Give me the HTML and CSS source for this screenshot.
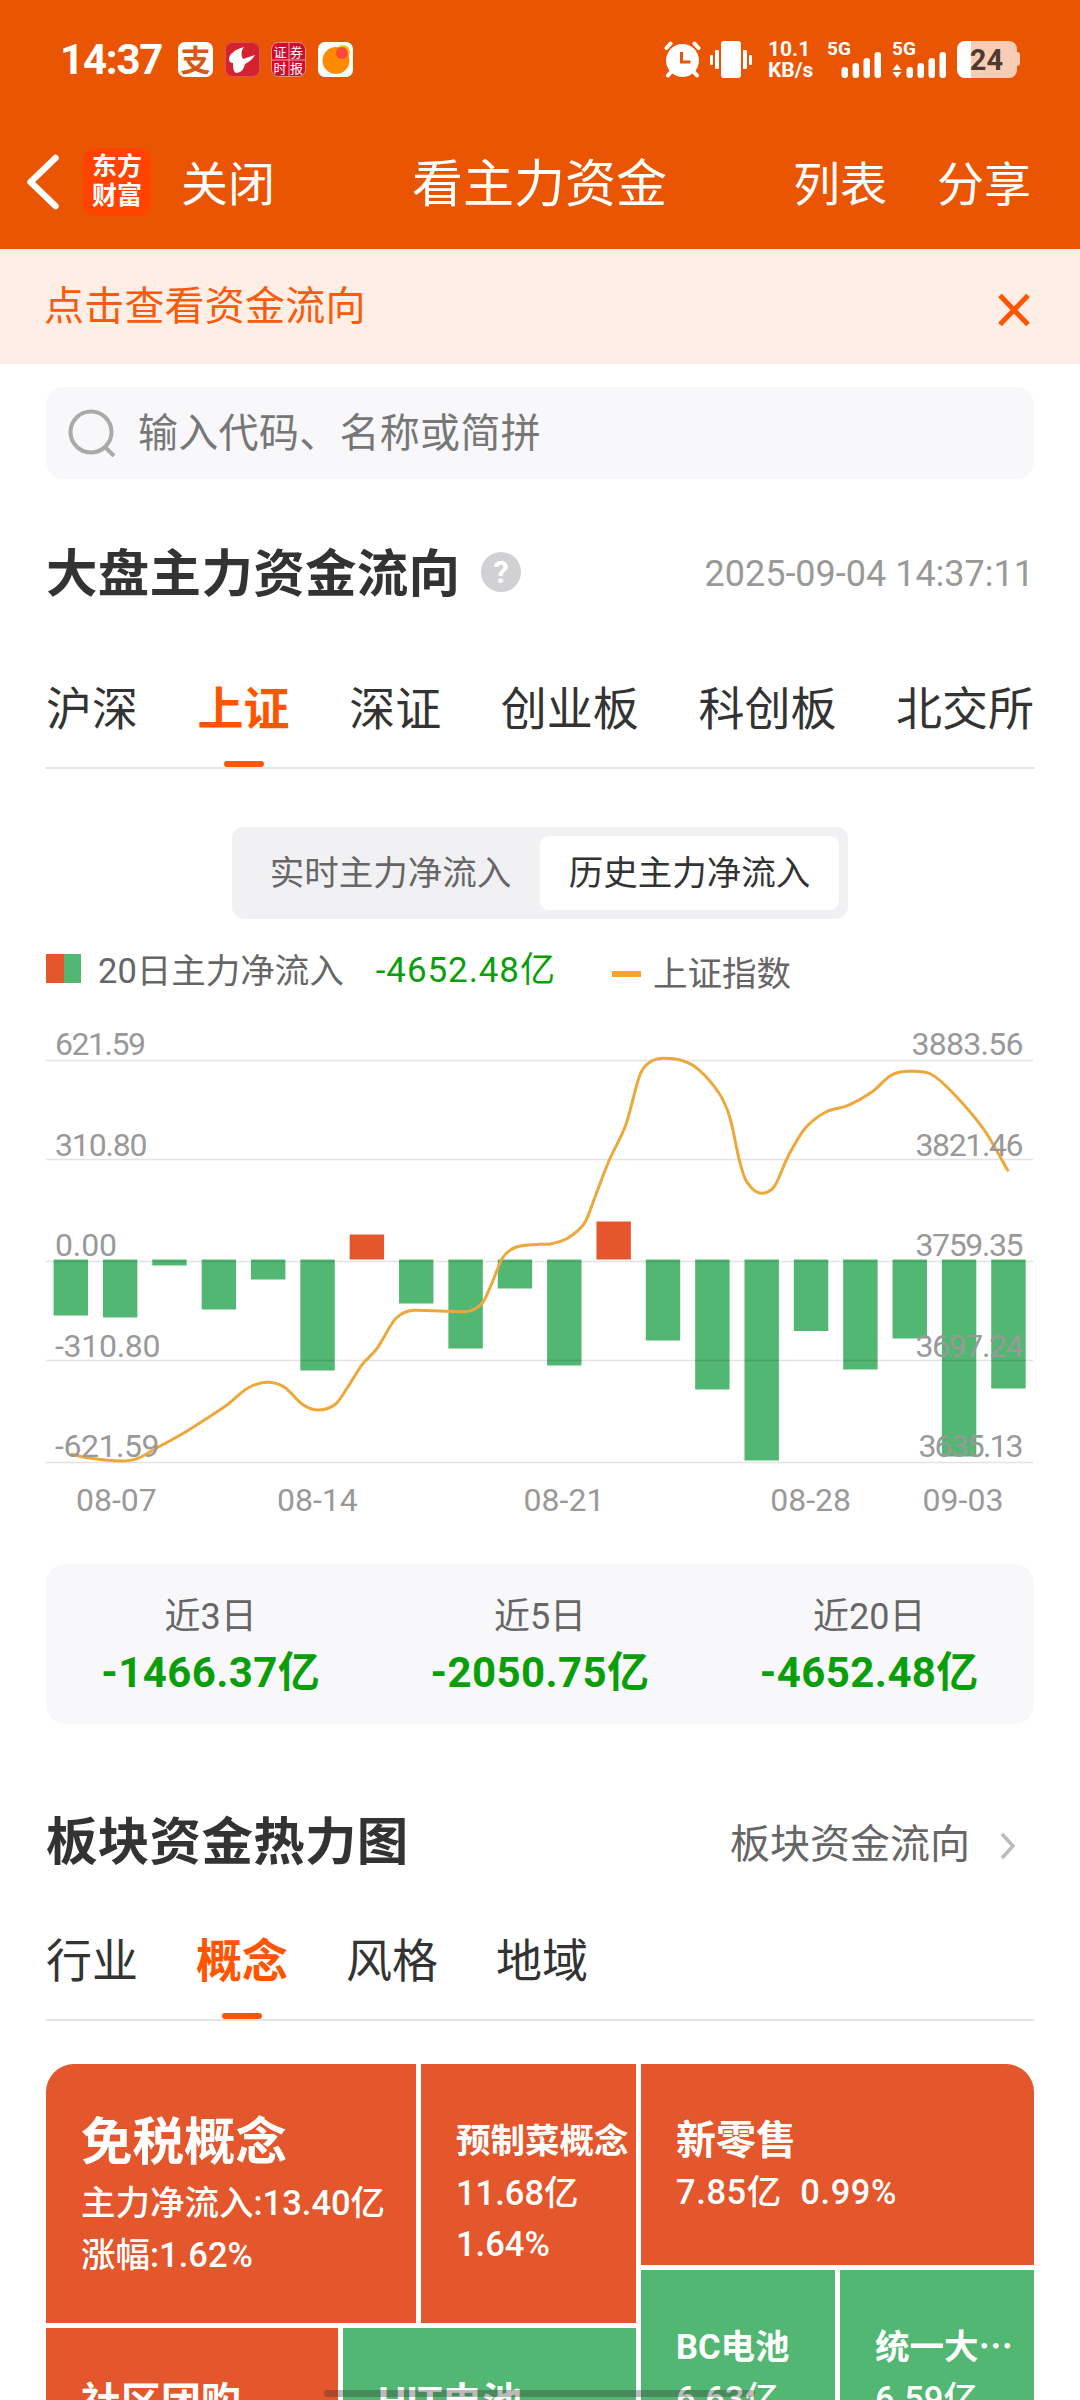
FILE: index.html
```html
<!DOCTYPE html>
<html lang="zh">
<head>
    <meta charset="UTF-8">
    <meta name="viewport" content="width=device-width, initial-scale=1.0">
    <title>看主力资金</title>
    <link rel="stylesheet" href="styles.css">
</head>
<body>
    <header class="header">
        <div class="status-bar">
            <span class="status-time">14:37</span>
            <div class="app-icons">
                <svg width="35" height="35" viewBox="0 0 35 35">
                    <rect width="35" height="35" rx="7" fill="#fff"/>
                    <text class="zhi" x="17.5" y="28.500" text-anchor="middle">支</text>
                </svg>
                <svg width="35" height="35" viewBox="0 0 35 35">
                    <rect x=".5" y=".5" width="34" height="34" rx="7" fill="#d4232f" stroke="#e2505a"/>
                    <path d="M19 5C11 7 4 12 4 17c0 3 2 4 4 4 0 4 0 8 3 10 5 0 8-4 9-9 4-2 8-5 10-9l-12 4c-2-4-2-8 1-12z" fill="#fff"/>
                </svg>
                <svg width="35" height="35" viewBox="0 0 35 35">
                    <rect x=".5" y=".5" width="34" height="34" rx="7" fill="#c8102e" stroke="#e88"/>
                    <path d="M18 0v35M0 18h35" stroke="#f0a0a8" stroke-width="1"/>
                    <g class="seal">
                        <text x="2.5" y="14.500">证</text>
                        <text x="19" y="14.500">券</text>
                        <text x="2.5" y="31">时</text>
                        <text x="19" y="31">报</text>
                    </g>
                </svg>
                <svg width="35" height="35" viewBox="0 0 35 35">
                    <rect width="35" height="35" rx="7" fill="#fff"/>
                    <circle cx="25" cy="10" r="7" fill="#fbc112"/>
                    <circle cx="18" cy="18.500" r="13.500" fill="#ff8a00"/>
                    <circle cx="24" cy="11" r="6" fill="#fb4a3a"/>
                </svg>
            </div>
            <div class="status-right">
                <svg width="37" height="37" viewBox="0 0 37 37">
                    <g stroke="#fff" stroke-width="4" stroke-linecap="round">
                        <path d="M2.500 7l4-4.500M34.500 7l-4-4.500M7 31l-3 3.500M30 31l3 3.500"/>
                    </g>
                    <circle cx="18.500" cy="19.500" r="16.500" fill="#fff"/>
                    <path d="M17.500 11v10h9" fill="none" stroke="#ea5504" stroke-width="3"/>
                </svg>
                <svg class="vibrate" width="42" height="37" viewBox="0 0 42 37" fill="#fff">
                    <rect x="11" y="0" width="20" height="37" rx="3"/>
                    <rect x="0" y="14" width="3" height="10" rx="1"/>
                    <rect x="5" y="9" width="4" height="19" rx="1"/>
                    <rect x="33" y="9" width="4" height="19" rx="1"/>
                    <rect x="39" y="14" width="3" height="10" rx="1"/>
                </svg>
                <div class="net-speed">
                    <span>10.1</span>
                    <span>KB/s</span>
                </div>
                <svg class="signal" width="55" height="37" viewBox="0 0 55 37" fill="#fff">
                    <text x="0" y="14">5G</text>
                    <rect x="14.500" y="26" width="6.500" height="11" rx="3"/>
                    <rect x="25.500" y="22" width="6.500" height="15" rx="3"/>
                    <rect x="36.500" y="17" width="6.500" height="20" rx="3"/>
                    <rect x="47.500" y="11" width="6.500" height="26" rx="3"/>
                </svg>
                <svg class="signal second" width="55" height="37" viewBox="0 0 55 37" fill="#fff">
                    <text x="0" y="14">5G</text>
                    <path d="M5 23l4.500 6h-9zM5 37l4.500-6h-9z"/>
                    <rect x="14.500" y="26" width="6.500" height="11" rx="3"/>
                    <rect x="25.500" y="22" width="6.500" height="15" rx="3"/>
                    <rect x="36.500" y="17" width="6.500" height="20" rx="3"/>
                    <rect x="47.500" y="11" width="6.500" height="26" rx="3"/>
                </svg>
                <svg class="battery" width="63" height="37" viewBox="0 0 63 37">
                    <path d="M14 0h38a8 8 0 0 1 8 8v3q3 0 3 3v8q0 3-3 3v4a8 8 0 0 1-8 8H14z" fill="#f9ccb4"/>
                    <path d="M14 0H8a8 8 0 0 0-8 8v21a8 8 0 0 0 8 8h6z" fill="#fff"/>
                    <text x="29.500" y="28.500" text-anchor="middle">24</text>
                </svg>
            </div>
        </div>
        <nav class="nav-bar">
            <svg width="32" height="56" viewBox="0 0 32 56">
                <path d="M28.500 4L3.500 28l25 24" fill="none" stroke="#fff" stroke-width="6.500" stroke-linecap="round" stroke-linejoin="round"/>
            </svg>
            <div class="logo">东方<br>财富</div>
            <span class="nav-close">关闭</span>
            <h1>看主力资金</h1>
            <span class="nav-list">列表</span>
            <span>分享</span>
        </nav>
    </header>

    <div class="notice">
        <span>点击查看资金流向</span>
        <svg width="34" height="34" viewBox="0 0 34 34">
            <path d="M3 2.500l28 29M31 2.500l-28 29" stroke="#ff5500" stroke-width="5"/>
        </svg>
    </div>

    <main class="container">
        <div class="search">
            <svg width="48" height="48" viewBox="0 0 48 48" fill="none" stroke="#aaa" stroke-width="4">
                <circle cx="23" cy="23" r="20.500"/>
                <path d="M37 38l9 9"/>
            </svg>
            <span>输入代码、名称或简拼</span>
        </div>

        <div class="section-head market-head">
            <h2>大盘主力资金流向</h2>
            <svg class="help" width="40" height="40" viewBox="0 0 40 40">
                <circle cx="20" cy="20" r="20" fill="#d1d1d3"/>
                <text x="20" y="31" text-anchor="middle">?</text>
            </svg>
            <span class="time">2025-09-04 14:37:11</span>
        </div>

        <div class="tabs market-tabs">
            <span>沪深</span>
            <span class="active">上证</span>
            <span>深证</span>
            <span>创业板</span>
            <span>科创板</span>
            <span>北交所</span>
        </div>

        <div class="segment">
            <span>实时主力净流入</span>
            <span class="selected">历史主力净流入</span>
        </div>

        <div class="legend">
            <i class="legend-bar"></i>
            <span>20日主力净流入</span>
            <span class="legend-value">-4652.48亿</span>
            <i class="legend-line"></i>
            <span class="legend-index">上证指数</span>
        </div>

        <svg class="chart" id="chart" width="988" height="510" viewBox="0 0 988 510"></svg>

        <div class="summary">
            <div class="summary-item">
                <div class="summary-label">近3日</div>
                <div class="summary-value">-1466.37亿</div>
            </div>
            <div class="summary-item">
                <div class="summary-label">近5日</div>
                <div class="summary-value">-2050.75亿</div>
            </div>
            <div class="summary-item">
                <div class="summary-label">近20日</div>
                <div class="summary-value">-4652.48亿</div>
            </div>
        </div>

        <div class="section-head sector-head">
            <h2>板块资金热力图</h2>
            <span class="more">板块资金流向</span>
            <svg width="16" height="28" viewBox="0 0 16 28">
                <path d="M2 2l11 12L2 26" fill="none" stroke="#bbb" stroke-width="3.500"/>
            </svg>
        </div>

        <div class="tabs sector-tabs">
            <span>行业</span>
            <span class="active">概念</span>
            <span>风格</span>
            <span>地域</span>
        </div>

        <div class="heatmap">
            <div class="heat-left">
                <div class="heat-row row-top">
                    <div class="cell up cell-first">
                        <div class="name name-lg">免税概念</div>
                        <p>主力净流入:13.40亿</p>
                        <p>涨幅:1.62%</p>
                    </div>
                    <div class="cell up cell-second">
                        <div class="name name-sm">预制菜概念</div>
                        <p>11.68亿</p>
                        <p>1.64%</p>
                    </div>
                </div>
                <div class="heat-row row-bottom">
                    <div class="cell up cell-community">
                        <div class="name">社区团购</div>
                    </div>
                    <div class="cell down">
                        <div class="name">HIT电池</div>
                    </div>
                </div>
            </div>
            <div class="heat-right">
                <div class="cell up cell-retail">
                    <div class="name">新零售</div>
                    <p class="wide">7.85亿&nbsp; 0.99%</p>
                </div>
                <div class="heat-row row-bottom">
                    <div class="cell down cell-small">
                        <div class="name name-sm">BC电池</div>
                        <p>6.63亿</p>
                    </div>
                    <div class="cell down cell-small">
                        <div class="name name-sm">统一大⋯</div>
                        <p>6.59亿</p>
                    </div>
                </div>
            </div>
        </div>
    </main>

    <div class="home-bar"></div>

    <script src="chart.js"></script>
</body>
</html>
```
FILE: styles.css
```css
* {
    box-sizing: border-box;
    margin: 0;
    padding: 0;
}

html, body {
    height: 2400px;
    overflow: hidden;
}

body {
    width: 1080px;
    font-family: Roboto, "Noto Sans CJK SC", sans-serif;
    background: #fff;
    color: #333;
}

svg {
    display: block;
    flex: none;
}

/* 顶部 */
.header {
    height: 249px;
    background: #ea5504;
    color: #fff;
}

.status-bar {
    display: flex;
    align-items: center;
    height: 119px;
    padding: 0 60px 0 60px;
}

.status-time {
    width: 118px;
    font-size: 42px;
    line-height: 50px;
    font-weight: 700;
    letter-spacing: -1.2px;
}

.app-icons {
    display: flex;
    gap: 11.500px;
}

.zhi {
    font: 700 30px/1 "Noto Sans CJK SC", sans-serif;
    fill: #d65a14;
}

.seal {
    font: 13px/1 "Noto Sans CJK SC", sans-serif;
    fill: #fff;
}

.status-right {
    display: flex;
    align-items: center;
    margin-left: auto;
}

.vibrate {
    margin-left: 9px;
}

.net-speed {
    width: 59px;
    padding-left: 16px;
    font-size: 21px;
    line-height: 21px;
    font-weight: 700;
}

.net-speed span {
    display: block;
}

.signal {
    margin-left: 16px;
    font-size: 19px;
    font-weight: 700;
    overflow: visible;
}

.signal.second {
    margin-left: 10px;
}

.battery {
    margin-left: 10px;
    font-size: 29px;
    font-weight: 700;
    fill: #4d3a30;
}

.nav-bar {
    display: flex;
    align-items: center;
    height: 126px;
    padding: 0 49px 0 27px;
    font-size: 47px;
    line-height: 60px;
}

.nav-bar span,
.nav-bar h1 {
    padding-top: 5px;
}

.nav-bar h1 {
    margin-left: 137px;
    font-size: 51px;
    font-weight: 400;
}

.logo {
    width: 68px;
    height: 68px;
    margin-left: 24px;
    padding-top: 4px;
    border-radius: 13px;
    background: #ff4400;
    font-size: 25px;
    line-height: 29px;
    font-weight: 700;
    text-align: center;
}

.nav-close {
    margin-left: 30px;
}

.nav-list {
    margin-left: auto;
    margin-right: 50px;
}

.notice {
    display: flex;
    align-items: center;
    justify-content: space-between;
    height: 115px;
    padding: 0 49px 0 44px;
    background: #ffeee5;
    color: #f95a0c;
    font-size: 40px;
    line-height: 50px;
}

.notice span {
    letter-spacing: 0.2px;
}

.notice svg {
    margin-top: 7px;
}

.container {
    padding: 23px 46px 0;
}

.search {
    display: flex;
    align-items: center;
    height: 92px;
    padding-left: 22px;
    border-radius: 17px;
    background: #f8f8fa;
    color: #777;
    font-size: 40px;
    line-height: 50px;
    letter-spacing: 0.3px;
}

.search span {
    margin: 1px 0 0 22px;
}

.section-head {
    display: flex;
    align-items: center;
    height: 70px;
}

.section-head h2 {
    font-size: 51.500px;
    line-height: 70px;
    font-weight: 700;
    letter-spacing: 0.3px;
}

.market-head {
    margin-top: 61px;
}

.help {
    margin: -7px 0 0 21px;
    font-size: 31px;
    font-weight: 700;
    fill: #fff;
}

.time {
    margin: -2px 0 0 auto;
    color: #999;
    font-size: 36px;
}

.tabs {
    display: flex;
    height: 93px;
    border-bottom: 2px solid #e5e5e5;
    font-size: 46px;
    line-height: 66px;
}

.tabs span {
    position: relative;
}

.tabs .active {
    color: #ff5500;
    font-weight: 700;
}

.tabs .active::after {
    content: "";
    position: absolute;
    left: 50%;
    bottom: 0;
    width: 40px;
    height: 6px;
    margin-left: -20px;
    border-radius: 3px;
    background: #fa5608;
}

.market-tabs {
    margin-top: 66px;
    justify-content: space-between;
}

.segment {
    display: flex;
    width: 616px;
    height: 92px;
    margin: 58px auto 0;
    padding: 9px;
    border-radius: 12px;
    background: #f1f1f4;
    color: #666;
    font-size: 34.500px;
    line-height: 74px;
    text-align: center;
}

.segment span {
    flex: 1;
}

.segment .selected {
    border-radius: 9px;
    background: #fff;
    color: #333;
}

.legend {
    display: flex;
    align-items: center;
    height: 50px;
    margin-top: 27px;
    color: #666;
    font-size: 34.500px;
    line-height: 50px;
}

.legend-bar {
    width: 35px;
    height: 29px;
    margin: -6px 17px 0 0;
    background: linear-gradient(90deg, #e4562b 50%, #52b772 50%);
}

.legend-value {
    margin-left: 32px;
    color: #0a9f0a;
    font-size: 35px;
    letter-spacing: 0.9px;
}

.legend-line {
    width: 29px;
    height: 6px;
    margin: 6px 12px 0 auto;
    background: #f5a52f;
}

.legend-index {
    margin: 5px 243px 0 0;
}

/* 走势图 */
.chart {
    margin-top: 24px;
    font-size: 32px;
}

.chart text {
    fill: #999;
}

.chart .grid {
    stroke: rgba(0, 0, 0, 0.11);
    stroke-width: 1.500;
}

.chart .index-line {
    fill: none;
    stroke: #eda83c;
    stroke-width: 3;
}

.bar-up {
    fill: #e4562b;
}

.bar-down {
    fill: #52b772;
}

.summary {
    display: flex;
    height: 160px;
    margin-top: 34px;
    padding-top: 25px;
    border-radius: 20px;
    background: #f8f8fa;
    text-align: center;
}

.summary-item {
    flex: 1;
}

.summary-label {
    color: #666;
    font-size: 36px;
    line-height: 56px;
}

.summary-value {
    color: #0a9f0a;
    font-size: 42px;
    line-height: 56px;
    font-weight: 700;
    letter-spacing: 0.4px;
}

.sector-head {
    margin-top: 84px;
}

.more {
    margin: -4px 30px 0 auto;
    color: #666;
    font-size: 40px;
}

.sector-head svg {
    margin: 5px 18px 0 0;
}

.sector-tabs {
    margin-top: 50px;
    gap: 58px;
}

/* 热力图 */
.heatmap {
    display: flex;
    gap: 5px;
    height: 336px;
    margin-top: 43px;
    border-radius: 28px 28px 0 0;
    overflow: hidden;
    color: #fff;
    font-size: 34.500px;
    font-weight: 500;
}

.heat-left,
.heat-right {
    display: flex;
    flex-direction: column;
    gap: 5px;
}

.heat-left {
    width: 590px;
}

.heat-right {
    flex: 1;
}

.heat-row {
    display: flex;
    gap: 5px;
}

.row-top {
    height: 259px;
}

.row-bottom {
    flex: 1;
    min-height: 0;
}

.cell {
    flex: 1;
    padding: 49px 0 0 35px;
    line-height: 51.500px;
    white-space: nowrap;
}

.up {
    background: #e4562b;
}

.down {
    background: #52b772;
}

.name {
    font-size: 40px;
    font-weight: 700;
}

.name-lg {
    font-size: 51.500px;
    line-height: 60px;
    margin-bottom: 5px;
}

.name-sm {
    font-size: 34.500px;
}

.wide {
    letter-spacing: 0.6px;
}

.cell-first {
    flex: none;
    width: 370px;
}

.cell-community {
    flex: none;
    width: 292px;
}

.cell-second {
    padding-top: 52px;
}

.cell-retail {
    flex: none;
    height: 201px;
    padding-top: 51px;
}

.cell-small {
    padding-top: 52px;
}

.home-bar {
    position: fixed;
    left: 324px;
    top: 2390px;
    width: 431px;
    height: 7px;
    border-radius: 4px;
    background: rgba(50, 50, 50, 0.33);
}
```
FILE: chart.js
```js
const chart = document.getElementById('chart');
const zeroY = 239.5;

// 每日主力净流入,负值向下
const flows = [-56, -58, -6, -50, -20, -111, 25, -44, -89, -29,
    -106, 38, -81, -130, -201, -71.5, -110, -79, -197, -129];

const indexPoints = [
    [24.9, 434], [43.5, 438], [74.5, 441], [91.7, 438.3], [112.4, 427], [136.5, 413.7],
    [160.6, 398.5], [181.3, 384.7], [201.9, 368], [220.9, 362.3], [238.1, 367], [257, 384.7],
    [272.5, 390], [289.7, 384], [301.8, 367], [315.6, 345.3], [331.1, 328.3], [350, 298.3],
    [369, 290.3], [418.9, 291.7], [436.1, 283.3], [446.4, 262], [456.8, 237.5], [470.5, 227],
    [494, 224.3], [504.3, 224], [521.5, 218.3], [538.8, 202.7], [549.1, 176.7], [562.9, 141],
    [580.1, 104], [593.9, 55], [604.2, 42], [618, 38.3], [635.2, 40.3], [652.4, 49.3],
    [673.1, 73.3], [684.1, 98.3], [693.7, 141.7], [700.6, 161.7], [715.4, 173.3],
    [728.2, 166.7], [741.9, 136.7], [759.2, 108.3], [779.8, 92], [802.2, 85.3],
    [826.3, 71.7], [845.2, 55.3], [863.1, 51.3], [884.8, 54], [907.2, 73.3],
    [938.2, 110], [962.3, 151.3]
];

// 网格线位置、左右刻度及其文字宽度
const rows = [
    { y: 40.5, textY: 34.7, left: ['621.59', 91], right: ['3883.56', 112] },
    { y: 139.5, textY: 135.7, left: ['310.80', 92.5], right: ['3821.46', 108] },
    { y: 241.5, textY: 236, left: ['0.00', 62], right: ['3759.35', 108] },
    { y: 340.5, textY: 336.7, left: ['-310.80', 105.5], right: ['3697.24', 108] },
    { y: 442.5, textY: 436.7, left: ['-621.59', 104.5], right: ['3635.13', 105] }
];

const dates = [[70.4, '08-07'], [271.3, '08-14'], [518, '08-21'], [764.7, '08-28'], [917, '09-03']];

// 三次插值,极值点处斜率为 0
function smoothPath(p) {
    const last = p.length - 1;
    const m = p.map((_, i) => {
        const a = p[Math.max(i - 1, 0)];
        const b = p[Math.min(i + 1, last)];
        if (i > 0 && i < last && (p[i][1] - a[1]) * (b[1] - p[i][1]) <= 0) return 0;
        return (b[1] - a[1]) / (b[0] - a[0]);
    });
    let d = `M${p[0][0]} ${p[0][1]}`;
    for (let i = 0; i < last; i++) {
        const h = (p[i + 1][0] - p[i][0]) / 3;
        d += `C${p[i][0] + h} ${p[i][1] + m[i] * h} ${p[i + 1][0] - h} ${p[i + 1][1] - m[i + 1] * h} ${p[i + 1][0]} ${p[i + 1][1]}`;
    }
    return d;
}

let html = '';
flows.forEach((v, i) => {
    const x = 7.6 + i * 49.35;
    const y = v > 0 ? zeroY - v : zeroY;
    html += `<rect class="${v > 0 ? 'bar-up' : 'bar-down'}" x="${x}" y="${y}" width="34.4" height="${Math.abs(v)}"/>`;
});
rows.forEach(r => {
    html += `<line class="grid" x1="0" x2="987" y1="${r.y}" y2="${r.y}"/>`;
});
html += `<path class="index-line" d="${smoothPath(indexPoints)}"/>`;
rows.forEach(r => {
    html += `<text x="9" y="${r.textY}" textLength="${r.left[1]}">${r.left[0]}</text>`;
    html += `<text x="${977.5 - r.right[1]}" y="${r.textY}" textLength="${r.right[1]}">${r.right[0]}</text>`;
});
dates.forEach(d => {
    html += `<text x="${d[0]}" y="490.7" text-anchor="middle">${d[1]}</text>`;
});
chart.innerHTML = html;
```
